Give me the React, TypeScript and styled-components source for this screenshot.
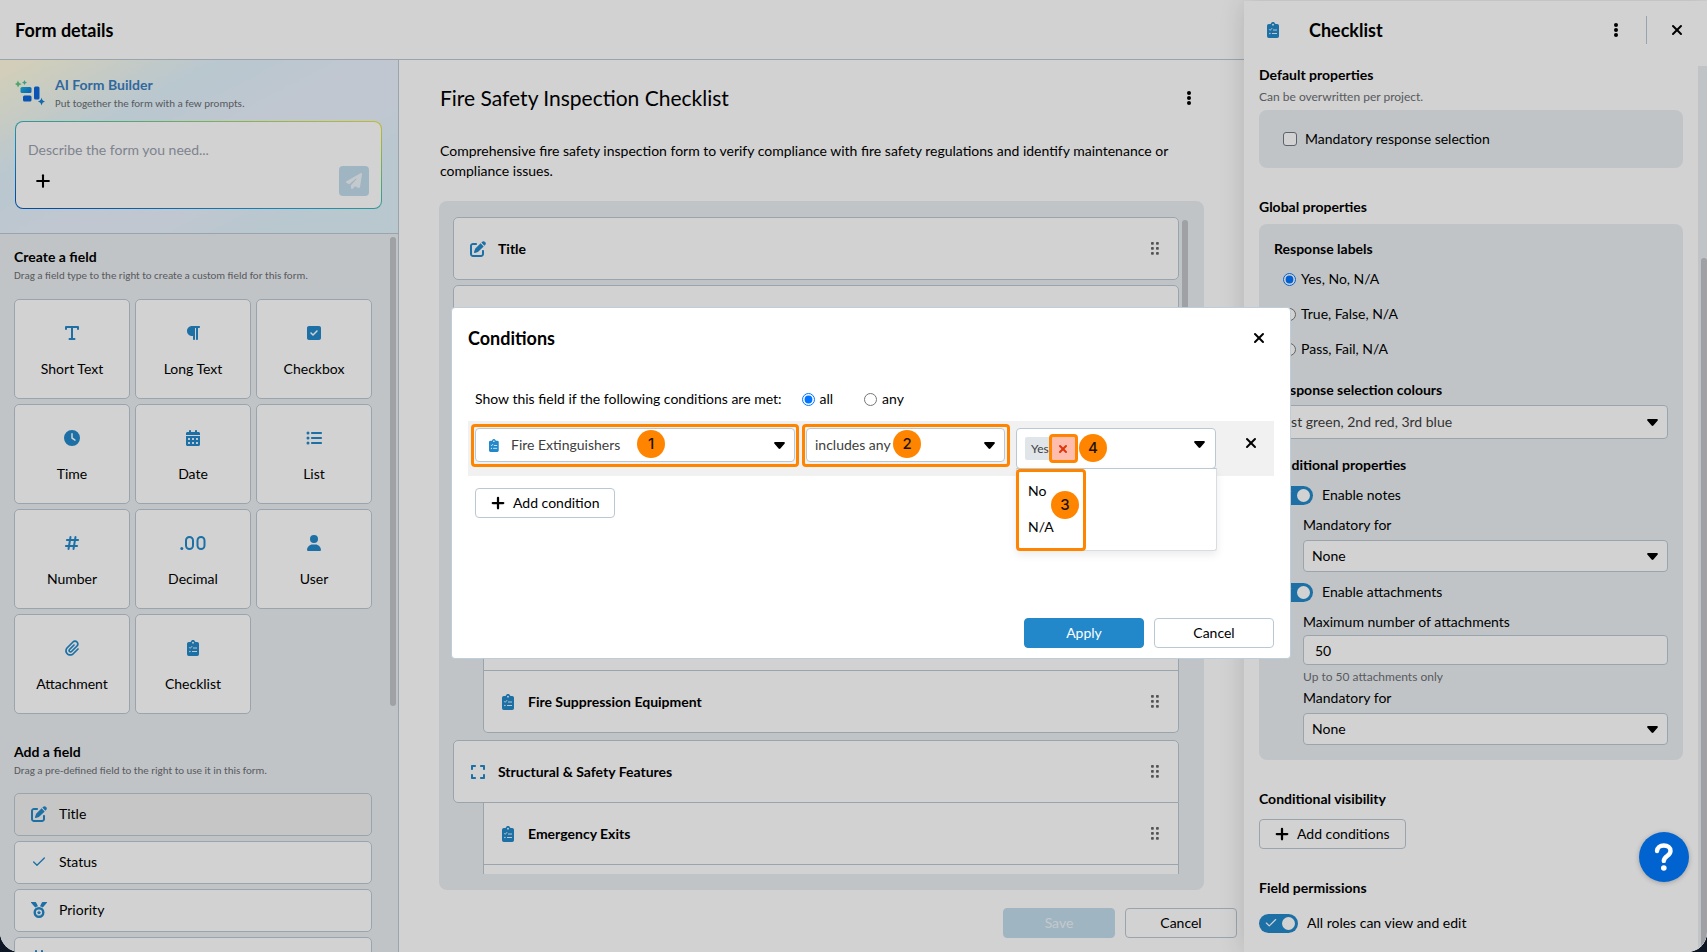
import React from 'react';
import styled, { createGlobalStyle, css } from 'styled-components';
import {
  FaCalendarDays,
  FaClock,
  FaExpand,
  FaHashtag,
  FaListUl,
  FaPaperclip,
  FaPaperPlane,
  FaParagraph,
  FaPenToSquare,
  FaSquareCheck,
  FaUser,
} from 'react-icons/fa6';
import { Check, Plus, X } from 'lucide-react';

const color = {
  text: '#000000',
  muted: '#6b6e73',
  blue: '#2288c9',
  border: '#bac8d3',
  panel: '#ebeff2',
  orange: '#ff8500',
};

const GlobalStyle = createGlobalStyle`
  *, *::before, *::after { box-sizing: border-box; }
  body {
    margin: 0;
    background: #0c1624;
    color: ${color.text};
    font-family: Lato, Carlito, sans-serif;
    font-size: 14px;
    line-height: 20px;
  }
  h1, h2, h3, p, fieldset, legend, ul { margin: 0; padding: 0; }
  fieldset { border: 0; min-width: 0; }
  button, input, select, textarea { font: inherit; color: inherit; }
  button { cursor: pointer; }
  svg { display: block; flex: none; }
`;

/* ---------- Icons ---------- */

const ShortTextIcon = () => (
  <svg width="16" height="16" viewBox="0 0 16 16" fill="none" stroke="currentColor" strokeWidth="2" strokeLinecap="round" strokeLinejoin="round">
    <path d="M2 4V2h12v2M8 2v12M5.500 14h5" />
  </svg>
);

const DecimalIcon = () => (
  <svg width="26" height="16" viewBox="0 0 26 16" fill="none" stroke="currentColor" strokeWidth="2">
    <circle cx="1.800" cy="13.500" r="1.500" fill="currentColor" stroke="none" />
    <rect x="6" y="2" width="7" height="12" rx="3.500" />
    <rect x="17.500" y="2" width="7" height="12" rx="3.500" />
  </svg>
);

const ClipboardIcon = ({ size = 16 }: { size?: number }) => (
  <svg width={size * 0.75} height={size} viewBox="0 0 12 16">
    <path
      fill={color.blue}
      d="M6 0c.9 0 1.600.5 1.900 1.300L8.500 2H10.200A1.800 1.800 0 0 1 12 3.800v10.400A1.800 1.800 0 0 1 10.200 16H1.800A1.800 1.800 0 0 1 0 14.200V3.800A1.800 1.800 0 0 1 1.800 2h1.700l.6-.7C4.400.5 5.100 0 6 0Z"
    />
    <circle cx="6" cy="2.700" r="0.900" fill="#fff" />
    <path d="M2.200 7.300l1 1 1.900-2.100M6 8h4M5 11.500h5" fill="none" stroke="#fff" strokeWidth="0.900" />
    <circle cx="2.900" cy="11.500" r="0.700" fill="#fff" />
  </svg>
);

const MedalIcon = () => (
  <svg width="16" height="16" viewBox="0 0 16 16">
    <path fill="currentColor" d="M0 0h4.300c.4 0 .7.200.8.500L7 4.200a6 6 0 0 0-2.800 1.200L.1.800C-.1.500-.1.200 0 0ZM16 0h-4.300c-.4 0-.7.200-.8.500L9 4.200a6 6 0 0 1 2.800 1.200L15.900.8c.2-.3.200-.6.100-.8Z" />
    <circle cx="8" cy="10.500" r="4.300" fill="none" stroke="currentColor" strokeWidth="2.400" />
    <path fill="currentColor" d="M8 8.200l.7 1.500 1.600.2-1.200 1.100.3 1.600L8 11.800l-1.400.8.300-1.600-1.200-1.100 1.600-.2z" />
  </svg>
);

const KebabIcon = () => (
  <svg width="4" height="14" viewBox="0 0 4 14" fill="currentColor">
    <circle cx="2" cy="2" r="2" />
    <circle cx="2" cy="7" r="2" />
    <circle cx="2" cy="12" r="2" />
  </svg>
);

const GripIcon = () => (
  <svg width="8" height="13" viewBox="0 0 8 13" fill="#666">
    {[0, 5, 10].map((y) => (
      <React.Fragment key={y}>
        <rect x="0" y={y} width="2.800" height="2.800" rx="0.800" />
        <rect x="5" y={y} width="2.800" height="2.800" rx="0.800" />
      </React.Fragment>
    ))}
  </svg>
);

const BuilderLogo = () => (
  <svg width="30" height="26" viewBox="0 0 30 26">
    <defs>
      <linearGradient id="builderTile" x1="0" y1="0" x2="1" y2="0.600">
        <stop offset="0" stopColor="#1ab5d6" />
        <stop offset="1" stopColor="#0f7de0" />
      </linearGradient>
    </defs>
    <path fill="#5ecb83" d="M3 .5q.6 3 3.800 3.500Q3.600 4.700 3 7.500 2.400 4.700-.2 4 2.400 3.200 3 .5Z" />
    <path fill="#43c4a0" d="M9.500 0q.4 2 2.500 2.500-2.100.5-2.500 2.500Q9.100 3 7 2.500 9.100 2 9.500 0Z" />
    <rect x="5.500" y="7" width="11" height="6" rx="1.500" fill="url(#builderTile)" />
    <rect x="8" y="15.500" width="8.500" height="6" rx="1.500" fill="#0c67dc" />
    <rect x="19" y="6.500" width="5.500" height="13" rx="1.500" fill="#0c67dc" />
    <path fill="#1681d4" d="M26.500 17.500q.6 3.400 3.700 4-3.100.7-3.700 3.900-.6-3.200-3.700-3.900 3.100-.6 3.700-4Z" />
  </svg>
);

/* ---------- Shared controls ---------- */

const IconButton = styled.button`
  display: flex;
  align-items: center;
  justify-content: center;
  width: 30px;
  height: 30px;
  padding: 0;
  border: 0;
  background: none;
`;

const Button = styled.button<{ $primary?: boolean; $width?: number }>`
  display: inline-flex;
  align-items: center;
  justify-content: center;
  gap: 6px;
  height: 30px;
  width: ${(p) => (p.$width ? `${p.$width}px` : 'auto')};
  padding: 0 ${(p) => (p.$width ? 13 : 15)}px 0 13px;
  border: 1px solid ${color.border};
  border-radius: 4px;
  background: #fff;
  ${(p) =>
    p.$primary &&
    css`
      border-color: ${color.blue};
      background: ${color.blue};
      color: #fff;
    `}
  &:disabled {
    border-color: #c3dcec;
    background: #c3dcec;
    color: #eef4f9;
  }
`;

const SelectBox = styled.div<{ $height?: number }>`
  position: relative;
  height: ${(p) => p.$height ?? 32}px;
`;

const Select = styled.select<{ $muted?: boolean; $icon?: boolean }>`
  appearance: none;
  width: 100%;
  height: 100%;
  padding: 0 28px 0 ${(p) => (p.$icon ? 35 : 8)}px;
  border: 1px solid ${color.border};
  border-radius: 4px;
  background: #fff;
  color: ${(p) => (p.$muted ? '#404040' : color.text)};
`;

const Caret = styled.span`
  position: absolute;
  top: 0;
  right: 10px;
  height: 100%;
  display: flex;
  align-items: center;
  pointer-events: none;
`;

const SelectIcon = styled(Caret)`
  right: auto;
  left: 14px;
`;

const CaretIcon = () => (
  <svg width="11" height="7" viewBox="0 0 11 7">
    <path d="M1.200 0h8.600c.9 0 1.400 1 .7 1.700L6.400 6.500c-.5.600-1.300.6-1.800 0L.5 1.700C-.2 1 .3 0 1.200 0Z" />
  </svg>
);

type DropDownProps = {
  label: string;
  id?: string;
  options: string[];
  height?: number;
  muted?: boolean;
  icon?: React.ReactNode;
};

const DropDown = ({ label, id, options, height, muted, icon }: DropDownProps) => (
  <SelectBox $height={height}>
    {icon && <SelectIcon>{icon}</SelectIcon>}
    <Select id={id} aria-label={id ? undefined : label} $muted={muted} $icon={!!icon}>
      {options.map((o) => (
        <option key={o}>{o}</option>
      ))}
    </Select>
    <Caret>
      <CaretIcon />
    </Caret>
  </SelectBox>
);

const Choice = styled.label`
  display: flex;
  align-items: center;
  gap: 5px;
`;

const Radio = styled.input.attrs({ type: 'radio' })`
  width: 13px;
  height: 13px;
  margin: 0;
`;

const Checkbox = styled.input.attrs({ type: 'checkbox' })`
  appearance: none;
  width: 14px;
  height: 14px;
  margin: 0 3px 0 0;
  border: 1px solid #6f7a85;
  border-radius: 3px;
  background: #fff;
`;

const ToggleLabel = styled.label`
  display: flex;
  align-items: center;
  gap: 9px;
  height: 20px;
`;

const ToggleTrack = styled.span`
  position: relative;
  width: 39px;
  height: 19px;
`;

const ToggleInput = styled.input.attrs({ type: 'checkbox', role: 'switch' })`
  appearance: none;
  display: block;
  width: 100%;
  height: 100%;
  margin: 0;
  border-radius: 10px;
  background: ${color.blue};
`;

const ToggleMarks = styled.span`
  position: absolute;
  inset: 0;
  display: flex;
  align-items: center;
  justify-content: space-between;
  padding: 0 3px 0 5px;
  color: #fff;
  pointer-events: none;
`;

const Knob = styled.span`
  width: 13px;
  height: 13px;
  border-radius: 50%;
  background: #fff;
`;

const Toggle = ({ children }: { children: string }) => (
  <ToggleLabel>
    <ToggleTrack>
      <ToggleInput defaultChecked />
      <ToggleMarks>
        <Check size={14} strokeWidth={2} />
        <Knob />
      </ToggleMarks>
    </ToggleTrack>
    {children}
  </ToggleLabel>
);

/* ---------- Page ---------- */

const Page = styled.div`
  position: relative;
  display: flex;
  height: 100vh;
  overflow: hidden;
  border-radius: 0 0 20px 20px;
  background: #fff;
`;

const Workspace = styled.div`
  flex: 1;
  min-width: 0;
  display: flex;
  flex-direction: column;
`;

const TopBar = styled.header`
  flex: none;
  display: flex;
  align-items: center;
  height: 60px;
  padding: 0 15px;
  border-bottom: 1px solid ${color.border};
`;

const PageTitle = styled.h1`
  font-size: 18px;
  line-height: 28px;
  font-weight: 700;
`;

const Columns = styled.div`
  flex: 1;
  min-height: 0;
  display: flex;
`;

const Thumb = styled.div`
  width: 6px;
  border-radius: 3px;
  background: #c1c4c7;
`;

/* ---------- Sidebar ---------- */

const Sidebar = styled.aside`
  flex: none;
  width: 399px;
  display: flex;
  flex-direction: column;
  border-right: 1px solid ${color.border};
  background: ${color.panel};
`;

const Builder = styled.section`
  flex: none;
  padding: 14px 16px 24px 15px;
  border-bottom: 1px solid ${color.border};
  background: linear-gradient(152deg, #fffbe2 4%, #e1f2fc 31%, #ebf2fe 55%, #ebf2fe 62%, #e1f2fc 80%);
`;

const BuilderHead = styled.div`
  display: flex;
  align-items: center;
  gap: 10px;
  height: 38px;
  margin-bottom: 9px;
`;

const BuilderTitle = styled.h2`
  color: #3c7fc0;
  font-size: 14px;
  line-height: 20px;
  font-weight: 700;
`;

const Hint = styled.p`
  margin-top: 1px;
  color: ${color.muted};
  font-family: Carlito, Lato, sans-serif;
  font-size: 11px;
  line-height: 16px;
`;

const PromptBox = styled.form`
  padding: 15px 12px 12px;
  border: 1px solid transparent;
  border-radius: 8px;
  background:
    linear-gradient(#fff, #fff) padding-box,
    linear-gradient(to top right, #0060c4 5%, #1fa5dd 38%, #54c79a 60%, #a6d95a 80%, #ece437) border-box;
`;

const PromptInput = styled.input`
  display: block;
  width: 100%;
  height: 24px;
  margin-bottom: 5px;
  padding: 0;
  border: 0;
  background: none;
  &::placeholder {
    color: #9a9fae;
    opacity: 1;
  }
`;

const PromptActions = styled.div`
  display: flex;
  justify-content: space-between;
`;

const SendButton = styled(IconButton)`
  border-radius: 4px;
  background: #c3dcec;
  color: #eef4f9;
`;

const FieldScroll = styled.div`
  flex: 1;
  min-height: 0;
  display: flex;
  padding-right: 2px;
  overflow: hidden;
`;

const FieldContent = styled.div`
  flex: 1;
  padding: 13px 18px 0 14px;
`;

const SidebarThumb = styled(Thumb)`
  height: 469px;
  margin-top: 3px;
`;

const Heading = styled.h3`
  font-size: 14px;
  line-height: 20px;
  font-weight: 700;
`;

const TileGrid = styled.div`
  display: grid;
  grid-template-columns: repeat(3, 1fr);
  gap: 5px;
  margin: 15px 0 28px;
`;

const Tile = styled.button`
  display: flex;
  flex-direction: column;
  align-items: center;
  gap: 18px;
  height: 100px;
  padding: 25px 0 0;
  border: 1px solid ${color.border};
  border-radius: 5px;
  background: #fff;
  svg {
    color: ${color.blue};
  }
`;

const FieldList = styled.div`
  display: flex;
  flex-direction: column;
  gap: 5px;
  margin-top: 14px;
`;

const FieldRow = styled.button<{ $used?: boolean }>`
  flex: none;
  display: flex;
  align-items: center;
  gap: 12px;
  height: 43px;
  padding: 0 16px 1px;
  border: 1px solid ${color.border};
  border-radius: 5px;
  background: ${(p) => (p.$used ? '#f1f1f1' : '#fff')};
  svg {
    color: ${color.blue};
  }
`;

const tiles: [string, React.ReactNode][] = [
  ['Short Text', <ShortTextIcon />],
  ['Long Text', <FaParagraph size={16} />],
  ['Checkbox', <FaSquareCheck size={16} />],
  ['Time', <FaClock size={16} />],
  ['Date', <FaCalendarDays size={16} />],
  ['List', <FaListUl size={16} />],
  ['Number', <FaHashtag size={16} />],
  ['Decimal', <DecimalIcon />],
  ['User', <FaUser size={16} />],
  ['Attachment', <FaPaperclip size={16} />],
  ['Checklist', <ClipboardIcon />],
];

/* ---------- Form editor ---------- */

const Editor = styled.main`
  flex: 1;
  min-width: 0;
  display: flex;
  flex-direction: column;
  padding: 23px 0 14px;
`;

const FormHead = styled.div`
  display: flex;
  align-items: center;
  justify-content: space-between;
  height: 30px;
  margin: 0 40px 28px 41px;
`;

const FormTitle = styled.h2`
  font-size: 21px;
  line-height: 30px;
  font-weight: 400;
`;

const FormText = styled.p`
  margin: 0 60px 20px 41px;
`;

const Canvas = styled.div`
  flex: 1;
  min-height: 0;
  display: flex;
  gap: 3px;
  margin: 0 40px;
  padding: 16px 16px 16px 14px;
  border-radius: 8px;
  background: ${color.panel};
`;

const CardList = styled.div`
  flex: 1;
  overflow: hidden;
`;

const CanvasThumb = styled(Thumb)`
  height: 360px;
  margin-top: 3px;
`;

const Card = styled.div<{ $nested?: boolean; $last?: boolean; $section?: boolean }>`
  display: flex;
  align-items: center;
  gap: 12px;
  height: 63px;
  margin-bottom: 5px;
  padding: 0 19px 0 16px;
  border: 1px solid ${color.border};
  border-radius: 5px;
  background: #fff;
  ${(p) =>
    p.$section &&
    css`
      margin: 6px 0 0;
      border-radius: 5px 5px 0 5px;
    `}
  ${(p) =>
    p.$nested &&
    css`
      height: 62px;
      margin: 0 0 ${p.$last ? 7 : 0}px 30px;
      border-top: 0;
      border-radius: ${p.$last ? '0 0 5px 5px' : 0};
    `}
`;

const CardIcon = styled.span`
  display: flex;
  justify-content: center;
  width: 16px;
  color: ${color.blue};
`;

const CardTitle = styled(Heading)`
  flex: 1;
`;

const Footer = styled.div`
  display: flex;
  justify-content: flex-end;
  gap: 10px;
  margin: 18px 7px 0 0;
`;

type FormCardProps = { title?: string; icon: React.ReactNode; section?: boolean; nested?: boolean; last?: boolean };

const FormCard = ({ title, icon, section, nested, last }: FormCardProps) => (
  <Card $section={section} $nested={nested} $last={last}>
    <CardIcon>{icon}</CardIcon>
    {title && <CardTitle>{title}</CardTitle>}
    <GripIcon />
  </Card>
);

/* ---------- Properties drawer ---------- */

const Drawer = styled.aside`
  flex: none;
  width: 463px;
  display: flex;
  flex-direction: column;
  margin-top: 1px;
  background: #fff;
  box-shadow: 0 0 24px rgba(0, 0, 0, 0.14);
`;

const DrawerHead = styled.header`
  flex: none;
  display: flex;
  align-items: center;
  height: 64px;
  padding: 0 15px 6px 23px;
`;

const DrawerTitle = styled(PageTitle)`
  flex: 1;
  margin-left: 30px;
`;

const Divider = styled.span`
  width: 1px;
  height: 28px;
  margin: 0 15px;
  background: ${color.border};
`;

const DrawerScroll = styled.div`
  flex: 1;
  min-height: 0;
  display: flex;
  overflow: hidden;
`;

const DrawerBody = styled.div`
  flex: 1;
  padding: 0 15px;
`;

const DrawerTrack = styled.div`
  display: flex;
  justify-content: flex-end;
  width: 9px;
  margin-top: 1px;
  padding-top: 192px;
  background: ${color.panel};
`;

const DrawerThumb = styled(Thumb)`
  border-radius: 3px 3px 0 0;
`;

const Group = styled.section`
  margin-bottom: 29px;
`;

const DrawerHint = styled.p`
  margin: 4px 0 5px;
  color: ${color.muted};
  font-size: 12px;
  line-height: 16px;
`;

const Box = styled.div`
  padding: 15px;
  border-radius: 8px;
  background: ${color.panel};
`;

const MandatoryBox = styled(Box)`
  padding: 19px 24px;
`;

const GlobalBox = styled(Box)`
  margin-top: 7px;
`;

const RadioList = styled.fieldset`
  display: flex;
  flex-direction: column;
  gap: 15px;
  margin-bottom: 21px;
  padding-left: 9px;
`;

const RadioLegend = styled(Heading)`
  margin-bottom: 10px;
`;

const ColourHeading = styled(Heading)`
  margin-bottom: 5px;
`;

const AdditionalHeading = styled(Heading)`
  margin: 16px 0 10px;
`;

const SubFields = styled.div`
  margin: 10px 0 10px 29px;
  &:last-child {
    margin-bottom: 0;
  }
`;

const FieldLabel = styled.label<{ $tight?: boolean }>`
  display: block;
  margin-bottom: ${(p) => (p.$tight ? 3 : 5)}px;
`;

const TextInput = styled.input`
  display: block;
  width: 100%;
  height: 30px;
  padding: 0 11px;
  border: 1px solid ${color.border};
  border-radius: 4px;
  background: #fff;
`;

const LimitHint = styled(DrawerHint)`
  margin-bottom: 3px;
`;

const AddConditions = styled(Button)`
  margin-top: 10px;
`;

const Permission = styled.div`
  margin-top: 15px;
`;

/* ---------- Conditions dialog ---------- */

const Backdrop = styled.div`
  position: absolute;
  inset: 0;
  z-index: 2;
  display: flex;
  align-items: center;
  justify-content: center;
  padding: 14px 0 0 35px;
  background: rgba(0, 0, 0, 0.176);
`;

const Dialog = styled.section`
  display: flex;
  flex-direction: column;
  width: min(840px, 90vw);
  min-height: 352px;
  padding: 16px 16px 10px;
  border: 1px solid #bfcdd8;
  border-radius: 4px;
  background: #fff;
`;

const DialogHead = styled.header`
  display: flex;
  align-items: center;
  justify-content: space-between;
  height: 28px;
  margin-bottom: 37px;
`;

const MatchRow = styled.fieldset`
  display: flex;
  margin: 0 7px 12px;
`;

const MatchText = styled.span`
  margin-right: 20px;
`;

const AllChoice = styled(Choice)`
  margin-right: 31px;
`;

const ConditionRow = styled.div`
  display: grid;
  grid-template-columns: minmax(0, 320fr) minmax(0, 199fr) minmax(0, 200fr) 39px;
  gap: 11px;
  align-items: start;
  height: 55px;
  margin-bottom: 12px;
  padding: 7px 8px 0 7px;
  background: #f1f1f1;
`;

const Slot = styled.div`
  position: relative;
`;

const MultiSelect = styled.div`
  display: flex;
  align-items: center;
  justify-content: space-between;
  height: 41px;
  padding: 0 10px 0 8px;
  border: 1px solid ${color.border};
  border-radius: 4px;
  background: #fff;
`;

const Tag = styled.span`
  display: flex;
  align-items: center;
  height: 23px;
  padding-left: 6px;
  border-radius: 2px;
  background: #e0e5ea;
  color: #404040;
  font-size: 12px;
`;

const TagRemove = styled.button`
  position: relative;
  display: flex;
  align-items: center;
  justify-content: center;
  width: 23px;
  height: 23px;
  margin-left: 3px;
  padding: 0;
  border: 0;
  background: #ffbdad;
  color: #de350b;
`;

const OpenButton = styled(IconButton)`
  width: 11px;
  height: 24px;
  margin-bottom: 8px;
`;

const Menu = styled.div`
  position: absolute;
  z-index: 3;
  top: 40px;
  left: 0;
  right: -1px;
  padding: 4px 0 5px;
  border: 1px solid #d8dde1;
  border-top-color: ${color.border};
  border-radius: 0 0 3px 3px;
  background: #fff;
  box-shadow: 0 4px 8px rgba(0, 0, 0, 0.08);
`;

const MenuItem = styled.div`
  padding: 8px 11px;
`;

const RemoveCondition = styled(IconButton)`
  margin-left: 9px;
`;

const AddCondition = styled(Button)`
  align-self: flex-start;
  margin-left: 7px;
`;

const DialogFooter = styled(Footer)`
  margin: auto 0 0;
`;

/* Numbered callouts laid over the condition controls */
const Outline = styled.span<{ $inset: string }>`
  position: absolute;
  inset: ${(p) => p.$inset};
  border: 3px solid ${color.orange};
  border-radius: 4px;
  pointer-events: none;
`;

const Callout = styled.span<{ $left: number; $top: number }>`
  position: absolute;
  left: ${(p) => p.$left}px;
  top: ${(p) => p.$top}px;
  z-index: 4;
  display: flex;
  align-items: center;
  justify-content: center;
  width: 28px;
  height: 28px;
  border-radius: 50%;
  background: ${color.orange};
  color: #1d1205;
  font-family: Inter, sans-serif;
  font-size: 15px;
  font-weight: 500;
  pointer-events: none;
`;

const HelpButton = styled.button`
  position: absolute;
  right: 18px;
  bottom: 70px;
  z-index: 5;
  display: flex;
  align-items: center;
  justify-content: center;
  width: 50px;
  height: 50px;
  padding: 0;
  border: 0;
  border-radius: 50%;
  background: #0063cf;
  box-shadow: 0 1px 5px rgba(0, 0, 0, 0.25);
`;

const roles = ['None', 'All roles'];

export default function App() {
  return (
    <>
      <GlobalStyle />
      <Page>
        <Workspace>
          <TopBar>
            <PageTitle>Form details</PageTitle>
          </TopBar>
          <Columns>
            <Sidebar>
              <Builder>
                <BuilderHead>
                  <BuilderLogo />
                  <div>
                    <BuilderTitle>AI Form Builder</BuilderTitle>
                    <Hint>Put together the form with a few prompts.</Hint>
                  </div>
                </BuilderHead>
                <PromptBox onSubmit={(e) => e.preventDefault()}>
                  <PromptInput aria-label="Form description" placeholder="Describe the form you need..." />
                  <PromptActions>
                    <IconButton type="button" aria-label="Attach">
                      <Plus size={20} strokeWidth={2.5} />
                    </IconButton>
                    <SendButton aria-label="Send">
                      <FaPaperPlane size={16} />
                    </SendButton>
                  </PromptActions>
                </PromptBox>
              </Builder>
              <FieldScroll>
                <FieldContent>
                  <Heading>Create a field</Heading>
                  <Hint>Drag a field type to the right to create a custom field for this form.</Hint>
                  <TileGrid>
                    {tiles.map(([name, icon]) => (
                      <Tile key={name}>
                        {icon}
                        {name}
                      </Tile>
                    ))}
                  </TileGrid>
                  <Heading>Add a field</Heading>
                  <Hint>Drag a pre-defined field to the right to use it in this form.</Hint>
                  <FieldList>
                    <FieldRow $used>
                      <FaPenToSquare size={16} />
                      Title
                    </FieldRow>
                    <FieldRow>
                      <Check size={16} strokeWidth={2} />
                      Status
                    </FieldRow>
                    <FieldRow>
                      <MedalIcon />
                      Priority
                    </FieldRow>
                    <FieldRow aria-label="Due date">
                      <FaCalendarDays size={16} />
                    </FieldRow>
                  </FieldList>
                </FieldContent>
                <SidebarThumb />
              </FieldScroll>
            </Sidebar>

            <Editor>
              <FormHead>
                <FormTitle>Fire Safety Inspection Checklist</FormTitle>
                <IconButton aria-label="Form options">
                  <KebabIcon />
                </IconButton>
              </FormHead>
              <FormText>
                Comprehensive fire safety inspection form to verify compliance with fire safety regulations and
                identify maintenance or compliance issues.
              </FormText>
              <Canvas>
                <CardList>
                  <FormCard title="Title" icon={<FaPenToSquare size={16} />} />
                  <FormCard icon={<Check size={16} />} />
                  <FormCard icon={<MedalIcon />} />
                  <FormCard icon={<FaExpand size={16} />} section />
                  <FormCard icon={<ClipboardIcon />} nested />
                  <FormCard icon={<ClipboardIcon />} nested />
                  <FormCard icon={<ClipboardIcon />} nested />
                  <FormCard title="Fire Suppression Equipment" icon={<ClipboardIcon />} nested last />
                  <FormCard title="Structural & Safety Features" icon={<FaExpand size={16} />} section />
                  <FormCard title="Emergency Exits" icon={<ClipboardIcon />} nested />
                  <FormCard icon={<ClipboardIcon />} nested last />
                </CardList>
                <CanvasThumb />
              </Canvas>
              <Footer>
                <Button $width={112} disabled>
                  Save
                </Button>
                <Button $width={112}>Cancel</Button>
              </Footer>
            </Editor>
          </Columns>
        </Workspace>

        <Drawer>
          <DrawerHead>
            <ClipboardIcon />
            <DrawerTitle as="h2">Checklist</DrawerTitle>
            <IconButton aria-label="Field options">
              <KebabIcon />
            </IconButton>
            <Divider />
            <IconButton aria-label="Close panel">
              <X size={16} strokeWidth={3} />
            </IconButton>
          </DrawerHead>
          <DrawerScroll>
            <DrawerBody>
              <Group>
                <Heading>Default properties</Heading>
                <DrawerHint>Can be overwritten per project.</DrawerHint>
                <MandatoryBox>
                  <Choice>
                    <Checkbox />
                    Mandatory response selection
                  </Choice>
                </MandatoryBox>
              </Group>
              <Group>
                <Heading>Global properties</Heading>
                <GlobalBox>
                  <RadioLegend>Response labels</RadioLegend>
                  <RadioList aria-label="Response labels">
                    <Choice>
                      <Radio name="labels" defaultChecked />
                      Yes, No, N/A
                    </Choice>
                    <Choice>
                      <Radio name="labels" />
                      True, False, N/A
                    </Choice>
                    <Choice>
                      <Radio name="labels" />
                      Pass, Fail, N/A
                    </Choice>
                  </RadioList>
                  <ColourHeading>Response selection colours</ColourHeading>
                  <DropDown
                    label="Response selection colours"
                    options={['1st green, 2nd red, 3rd blue']}
                    height={34}
                    muted
                  />
                  <AdditionalHeading>Additional properties</AdditionalHeading>
                  <Toggle>Enable notes</Toggle>
                  <SubFields>
                    <FieldLabel htmlFor="notes-mandatory">Mandatory for</FieldLabel>
                    <DropDown id="notes-mandatory" label="Mandatory for" options={roles} />
                  </SubFields>
                  <Toggle>Enable attachments</Toggle>
                  <SubFields>
                    <FieldLabel $tight htmlFor="max-attachments">
                      Maximum number of attachments
                    </FieldLabel>
                    <TextInput id="max-attachments" defaultValue="50" />
                    <LimitHint>Up to 50 attachments only</LimitHint>
                    <FieldLabel htmlFor="files-mandatory">Mandatory for</FieldLabel>
                    <DropDown id="files-mandatory" label="Mandatory for" options={roles} />
                  </SubFields>
                </GlobalBox>
              </Group>
              <Group>
                <Heading>Conditional visibility</Heading>
                <AddConditions>
                  <Plus size={18} strokeWidth={3} />
                  Add conditions
                </AddConditions>
              </Group>
              <Group>
                <Heading>Field permissions</Heading>
                <Permission>
                  <Toggle>All roles can view and edit</Toggle>
                </Permission>
              </Group>
            </DrawerBody>
            <DrawerTrack>
              <DrawerThumb />
            </DrawerTrack>
          </DrawerScroll>
        </Drawer>

        <Backdrop>
          <Dialog role="dialog" aria-modal="true" aria-labelledby="dialog-title">
            <DialogHead>
              <PageTitle as="h2" id="dialog-title">
                Conditions
              </PageTitle>
              <IconButton aria-label="Close">
                <X size={16} strokeWidth={3} />
              </IconButton>
            </DialogHead>
            <MatchRow>
              <MatchText>Show this field if the following conditions are met:</MatchText>
              <AllChoice>
                <Radio name="match" defaultChecked />
                all
              </AllChoice>
              <Choice>
                <Radio name="match" />
                any
              </Choice>
            </MatchRow>
            <ConditionRow>
              <Slot>
                <DropDown
                  label="Field"
                  options={['Fire Extinguishers']}
                  height={34}
                  muted
                  icon={<ClipboardIcon size={13} />}
                />
                <Outline $inset="-4px -4px -5px" />
                <Callout $left={162} $top={2}>1</Callout>
              </Slot>
              <Slot>
                <DropDown label="Operator" options={['includes any']} height={34} muted />
                <Outline $inset="-4px -5px -5px -4px" />
                <Callout $left={87} $top={2}>2</Callout>
              </Slot>
              <Slot>
                <MultiSelect>
                  <Tag>
                    Yes
                    <TagRemove aria-label="Remove Yes">
                      <X size={12} strokeWidth={4} />
                      <Outline $inset="-3px" />
                    </TagRemove>
                  </Tag>
                  <OpenButton aria-label="Toggle options">
                    <CaretIcon />
                  </OpenButton>
                </MultiSelect>
                <Callout $left={63} $top={6}>4</Callout>
                <Menu role="listbox" aria-label="Values">
                  <MenuItem role="option">No</MenuItem>
                  <MenuItem role="option">N/A</MenuItem>
                  <Outline $inset="0 130px -1px -1px" />
                  <Callout $left={34} $top={22}>3</Callout>
                </Menu>
              </Slot>
              <RemoveCondition aria-label="Remove condition">
                <X size={16} strokeWidth={3} />
              </RemoveCondition>
            </ConditionRow>
            <AddCondition>
              <Plus size={18} strokeWidth={3} />
              Add condition
            </AddCondition>
            <DialogFooter>
              <Button $primary $width={120}>
                Apply
              </Button>
              <Button $width={120}>Cancel</Button>
            </DialogFooter>
          </Dialog>
        </Backdrop>

        <HelpButton aria-label="Help">
          <svg width="20" height="28" viewBox="0 0 20 28" fill="none" stroke="#fff" strokeWidth="4.400" strokeLinecap="round">
            <path d="M3 8c.3-3.500 3-5.500 6.800-5.500 4 0 6.700 2.200 6.700 5.400 0 5-6.700 5-6.700 10" />
            <circle cx="9.800" cy="25" r="2.800" fill="#fff" stroke="none" />
          </svg>
        </HelpButton>
      </Page>
    </>
  );
}
